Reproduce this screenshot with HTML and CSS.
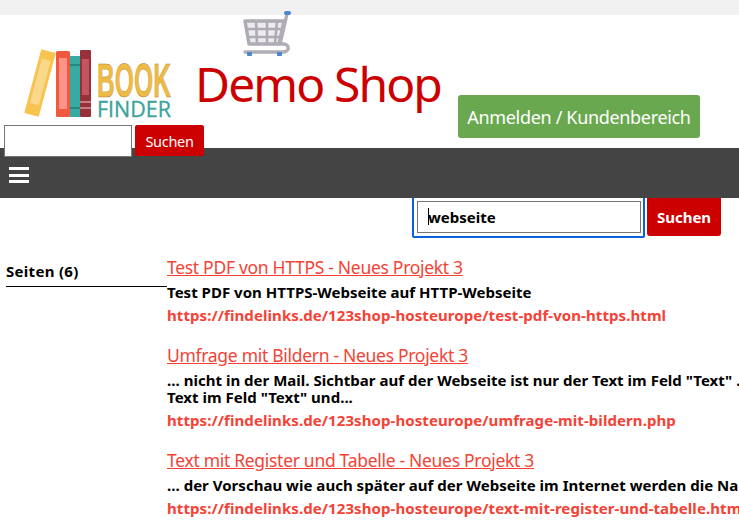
FILE: index.html
```html
<!DOCTYPE html>
<html lang="de">
<head>
<meta charset="utf-8">
<title>Demo Shop</title>
<link rel="stylesheet" href="styles.css">
</head>
<body>
<div class="topband"></div>
<header class="header">
  <div class="brand-col">
    <svg class="logo" width="150" height="72" viewBox="0 0 150 72" aria-label="Book Finder">
      <g transform="rotate(15 16 38)">
        <rect x="8" y="3" width="15" height="66" rx="1" fill="#f9c34f"/>
        <rect x="11" y="12" width="9" height="46" fill="#f8d98c"/>
      </g>
      <rect x="32" y="4" width="14" height="66" rx="1.5" fill="#f1593e"/>
      <rect x="35" y="11" width="8" height="51" fill="#fd9487"/>
      <rect x="46" y="9" width="10" height="61" fill="#38aaa4"/>
      <rect x="46" y="17" width="10" height="2" fill="#268680"/>
      <rect x="46" y="60" width="10" height="2" fill="#268680"/>
      <rect x="56" y="3" width="11" height="67" rx="1" fill="#98303a"/>
      <rect x="58" y="12" width="7" height="36" fill="#c25560"/>
      <rect x="56" y="54" width="11" height="2" fill="#c97a82"/>
      <rect x="56" y="60" width="11" height="2" fill="#c97a82"/>
      <text class="logo-book" x="73" y="50" textLength="74" lengthAdjust="spacingAndGlyphs">BOOK</text>
      <text class="logo-finder" x="73" y="70" textLength="74" lengthAdjust="spacingAndGlyphs">FINDER</text>
    </svg>
    <form class="mini-search">
      <input class="mini-input" type="text">
      <button class="mini-btn" type="button">Suchen</button>
    </form>
  </div>
  <div class="title-col">
    <svg class="cart" width="48" height="45" viewBox="0 0 48 45" aria-hidden="true">
      <path d="M2 10 H41 L36 33 H6 Z" fill="#eceaef" stroke="#aeabb4" stroke-width="3.4" stroke-linejoin="round"/>
      <path d="M13 10 L14 33 M24 10 V33 M34 10 L32 33 M3 18 H39 M5 26 H37" stroke="#aeabb4" stroke-width="2.6" fill="none"/>
      <path d="M44 3 L37 33 H41 Q46 34 45 38 Q44 41 40 41 H2" stroke="#b0adb6" stroke-width="3.4" fill="none" stroke-linecap="round"/>
      <rect x="41" y="0" width="7" height="4" rx="2" fill="#4a87cf"/>
      <rect x="4" y="41" width="5" height="4" rx="1" fill="#4a87cf"/>
      <rect x="34" y="41" width="5" height="4" rx="1" fill="#4a87cf"/>
    </svg>
    <h1 class="shop-title">Demo Shop</h1>
  </div>
  <a class="login-btn" href="#">Anmelden / Kundenbereich</a>
</header>
<nav class="navbar">
  <div class="burger"><span></span><span></span><span></span></div>
</nav>
<form class="main-search">
  <div class="focus-ring"><input class="main-input" type="text" value="webseite"><span class="caret"></span></div>
  <button class="main-btn" type="button">Suchen</button>
</form>
<main class="content">
  <aside class="side">
    <div class="side-head">Seiten (6)</div>
  </aside>
  <section class="results">
    <article class="result">
      <a class="r-title" href="#">Test PDF von HTTPS - Neues Projekt 3</a>
      <p class="r-desc">Test PDF von HTTPS-Webseite auf HTTP-Webseite</p>
      <a class="r-url" href="#">https://findelinks.de/123shop-hosteurope/test-pdf-von-https.html</a>
    </article>
    <article class="result">
      <a class="r-title" href="#">Umfrage mit Bildern - Neues Projekt 3</a>
      <p class="r-desc">... nicht in der Mail. Sichtbar auf der Webseite ist nur der Text im Feld "Text" .<br>Text im Feld "Text" und...</p>
      <a class="r-url" href="#">https://findelinks.de/123shop-hosteurope/umfrage-mit-bildern.php</a>
    </article>
    <article class="result">
      <a class="r-title" href="#">Text mit Register und Tabelle - Neues Projekt 3</a>
      <p class="r-desc">... der Vorschau wie auch später auf der Webseite im Internet werden die Namen</p>
      <a class="r-url" href="#">https://findelinks.de/123shop-hosteurope/text-mit-register-und-tabelle.html</a>
    </article>
  </section>
</main>
</body>
</html>
```
FILE: styles.css
```css
html, body { margin: 0; padding: 0; height: 100%; overflow: hidden; background: #fff; }
body { font-family: "Noto Sans", "DejaVu Sans", sans-serif; color: #000; }
.topband { height: 15px; background: #f1f1f1; }
.header { height: 133px; display: flex; align-items: flex-start; position: relative; z-index: 3; }
.brand-col { width: 197px; flex: none; display: flex; flex-direction: column; }
.logo { display: block; margin: 32px 0 0 24px; }
.logo-book { font: 700 49px "Liberation Sans", sans-serif; fill: #f0bb45; stroke: #a88434; stroke-width: .4px; }
.logo-finder { font: 400 21px "Open Sans", sans-serif; fill: #3ba39b; stroke: #3ba39b; stroke-width: .3px; }
.mini-search { display: flex; align-items: flex-start; gap: 3px; margin: 6px 0 0 4px; width: max-content; }
.mini-input { flex: none; width: 128px; height: 32px; box-sizing: border-box; border: 1.5px solid #767676; background: #fff; padding: 0; }
.mini-btn { flex: none; width: 69px; height: 31px; border: 0; border-radius: 2px; background: #c00; color: #fff; font: 400 14.5px "Noto Sans", sans-serif; letter-spacing: -.3px; padding: 0; }
.title-col { width: 261px; flex: none; display: flex; flex-direction: column; }
.cart { display: block; margin: -4px 0 0 46px; }
.shop-title { margin: -2px 0 0 -2px; font: 400 48px/60px "Noto Sans", sans-serif; color: #c00; white-space: nowrap; letter-spacing: -1.9px; }
.login-btn { margin-top: 80px; width: 242px; height: 43px; display: flex; align-items: center; justify-content: center; border-radius: 3px; background: #6aa84f; color: #fff; font: 400 18px "Noto Sans", sans-serif; letter-spacing: -.33px; text-decoration: none; white-space: nowrap; }
.navbar { height: 50px; background: #444; position: relative; z-index: 2; box-sizing: border-box; padding: 19px 9px; }
.burger { width: 20px; display: flex; flex-direction: column; gap: 3.5px; }
.burger span { display: block; height: 3px; background: #fff; }
.main-search { display: flex; align-items: flex-start; gap: 2px; margin: -3px 0 0 412px; }
.focus-ring { position: relative; width: 233px; height: 43px; box-sizing: border-box; border: 2px solid #0a63d8; border-radius: 2px; padding: 4px 2px 3px 3px; }
.caret { position: absolute; left: 14px; top: 11px; width: 1px; height: 17px; background: #000; }
.main-input { display: block; width: 100%; height: 32px; box-sizing: border-box; border: 1px solid #767676; outline: 0; padding: 0 10px; font: 700 15px "Noto Sans", sans-serif; background: #fff; color: #000; }
.main-btn { width: 74px; height: 41px; border: 0; border-radius: 3px; background: #c00; color: #fff; font: 700 15px "Noto Sans", sans-serif; padding: 3px 0 0; }
.content { display: flex; align-items: flex-start; margin-top: 17px; }
.side { width: 161px; margin: 7px 0 0 6px; flex: none; }
.side-head { font-size: 15px; font-weight: 700; line-height: 18px; letter-spacing: .3px; padding-bottom: 6px; border-bottom: 1px solid #000; }
.results { flex: none; white-space: nowrap; }
.result { margin-bottom: 19px; }
.r-title { display: block; font: 400 17.5px/24px "Noto Sans", sans-serif; letter-spacing: -.3px; color: #f44336; text-decoration: underline; }
.r-desc { margin: 5px 0 0; font-size: 15px; line-height: 17px; font-weight: 700; letter-spacing: .02px; }
.r-url { display: block; margin-top: 6px; font-size: 15px; line-height: 17px; font-weight: 700; letter-spacing: .08px; color: #f44336; text-decoration: none; }
```
